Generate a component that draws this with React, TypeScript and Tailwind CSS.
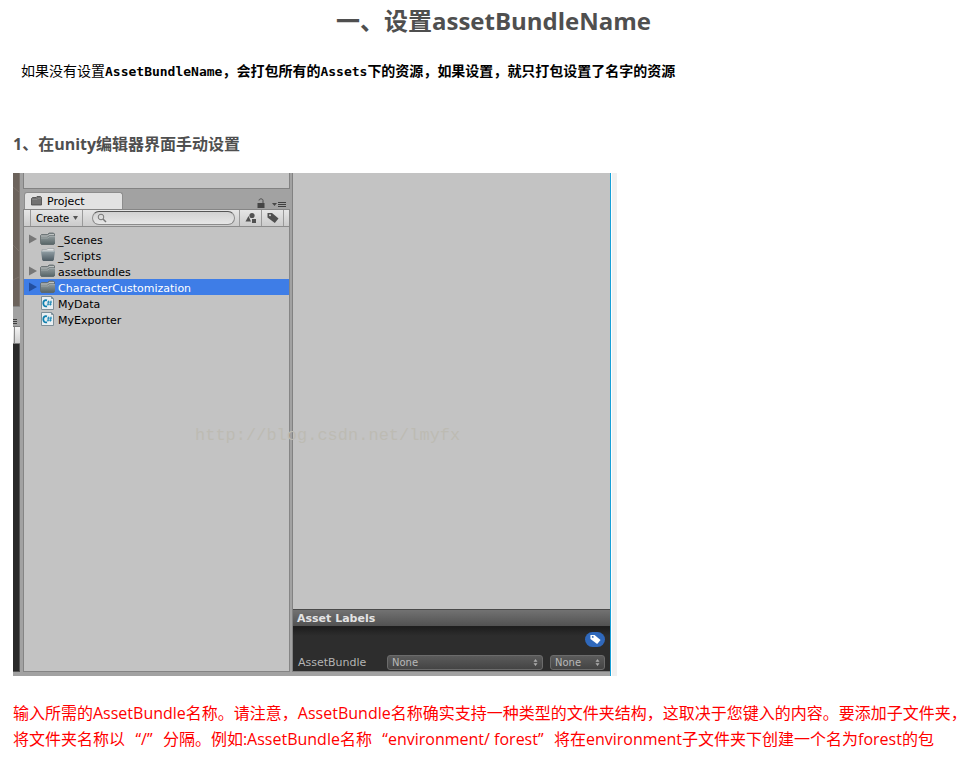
import React from "react";

type Asset = { name: string; kind: "folder" | "open" | "script"; arrow?: boolean; selected?: boolean };

// Full-width Chinese comma
const comma = "\uFF0C";

const assets: Asset[] = [
  { name: "_Scenes", kind: "folder", arrow: true },
  { name: "_Scripts", kind: "open" },
  { name: "assetbundles", kind: "folder", arrow: true },
  { name: "CharacterCustomization", kind: "folder", arrow: true, selected: true },
  { name: "MyData", kind: "script" },
  { name: "MyExporter", kind: "script" },
];

function AssetIcon({ kind }: { kind: Asset["kind"] }) {
  if (kind === "script") {
    return (
      <svg width="16" height="16" viewBox="0 0 16 16" className="shrink-0" aria-hidden="true">
        <path d="M1.500 1.500h10l2 2v11h-12z" fill="#e9eff2" stroke="#7e8f98" />
        <path d="M11.500 1.500v2h2" fill="none" stroke="#7e8f98" />
        <path d="M7 5.300C4.600 4.600 3.300 6.100 3.300 8.300s1.400 3.600 3.700 3" fill="none" stroke="#0e7fae" strokeWidth="1.800" />
        <path d="M8.600 5.600l-.7 5M11 5.600l-.7 5M7.200 7.100h4.800M6.900 9.200h4.800" stroke="#1787b5" strokeWidth="0.9" />
      </svg>
    );
  }
  if (kind === "open") {
    return (
      <svg width="16" height="16" viewBox="0 0 16 16" className="shrink-0" aria-hidden="true">
        <defs>
          <linearGradient id="openFolder" x1="0" y1="0" x2="0" y2="1">
            <stop offset="0" stopColor="#93a0a6" />
            <stop offset="1" stopColor="#4c5a62" />
          </linearGradient>
        </defs>
        <path d="M2 4V2.500h4.500L8 1.500h6V4H2z" fill="#dfe2e3" stroke="#9ca2a5" strokeWidth="0.7" />
        <path d="M1 4h14l-1.200 9-1 1H3.200l-1-1z" fill="url(#openFolder)" />
        <path d="M1.500 4.500h13" stroke="#b3bcc0" strokeWidth="0.8" />
      </svg>
    );
  }
  return (
    <svg width="16" height="16" viewBox="0 0 16 16" className="shrink-0" aria-hidden="true">
      <defs>
        <linearGradient id="folder" x1="0" y1="0" x2="0" y2="1">
          <stop offset="0" stopColor="#8f999b" />
          <stop offset="1" stopColor="#566466" />
        </linearGradient>
      </defs>
      <path d="M.5 12.500V4.500L1.500 3.500h6l1.500-1.500h4.500l1 1v9.500l-1 1h-12z" fill="#7e8789" stroke="#5f686b" strokeWidth="0.8" />
      <path d="M1 5h6.500L9 3.500h5" fill="none" stroke="#c6caca" strokeWidth="0.9" />
      <path d="M1 7h7l1.500-1.500H15v7l-1 1H1.500L1 13z" fill="url(#folder)" />
      <path d="M1 7h7l1.500-1.500H15" fill="none" stroke="#a9b1b3" strokeWidth="0.7" />
    </svg>
  );
}

function TagShape({ size, fill, hole }: { size: number; fill: string; hole: string }) {
  return (
    <svg width={size} height={size} viewBox="0 0 12 12" aria-hidden="true">
      <path d="M.5 1h4.500l6.500 5.500-3.700 4.500L.5 5.500z" fill={fill} />
      <circle cx="3" cy="3.200" r="1" fill={hole} />
    </svg>
  );
}

function LabelSelect({ id, label, width }: { id: string; label: string; width: string }) {
  return (
    <div className={`relative ${width}`}>
      <select
        id={id}
        aria-label={label}
        className="block h-[15px] w-full appearance-none rounded-[3px] border border-[#6b6b6b] bg-linear-to-b from-[#5b5b5b] to-[#444] px-1 text-[10px] leading-[13px] text-[#b8b8b8]"
      >
        <option>None</option>
      </select>
      <svg width="5" height="7" viewBox="0 0 5 7" className="pointer-events-none absolute top-1 right-[5px]" aria-hidden="true">
        <path d="M2.500 0l2 2.800h-4zM2.500 7l-2-2.800h4z" fill="#adadad" />
      </svg>
    </div>
  );
}

function SideStrip() {
  return (
    <div className="flex w-[7px] shrink-0 flex-col">
      <div className="h-[133px] border-r border-[#7d756f] bg-[#6c635c]">
        <svg width="6" height="133" viewBox="0 0 6 133" aria-hidden="true">
          <path d="M0 14l6 5M0 72l6 6M0 107l6-3" stroke="#7b726b" fill="none" />
        </svg>
      </div>
      <div className="flex h-5 flex-col justify-end border-t border-[#858585] bg-[#a2a2a2] pb-px">
        <svg width="5" height="6" viewBox="0 0 5 6" aria-hidden="true">
          <path d="M0 .5h4M0 2.500h4M0 4.500h4" stroke="#3f3f3f" />
        </svg>
      </div>
      <div className="h-[18px] border-y border-[#7c7c7c] bg-linear-to-b from-[#f4f4f4] to-[#cfcfcf]">
        <div className="h-full w-[2px] border-r border-[#8a8a8a]" />
      </div>
      <div className="grow border-r border-b border-[#555] bg-[#292929]" />
    </div>
  );
}

function ProjectPanel() {
  return (
    <div className="flex w-[267px] shrink-0 flex-col">
      <div className="h-4 border-x border-b border-[#828282] bg-[#c3c3c3]" />
      <div className="flex h-5 items-end justify-between pl-px">
        <button className="flex h-[17px] w-[99px] items-center gap-1 rounded-t-[3px] border-x border-t border-[#8d8d8d] bg-[#e2e2e2] pl-1.5 text-[11px] leading-4">
          <svg width="12" height="10" viewBox="0 0 12 10" aria-hidden="true">
            <path d="M.5 9V2.500l1-1h3.500L6 .5h3.500l1 1V9z" fill="#737373" stroke="#484848" strokeWidth="0.8" />
            <path d="M1 3.500h5l1-1h3" stroke="#8b8b8b" strokeWidth="0.7" fill="none" />
          </svg>
          <span className="pt-0.5">Project</span>
        </button>
        <div className="flex items-end gap-[7px] pr-1 pb-px">
          <button aria-label="锁定">
            <svg width="8" height="10" viewBox="0 0 8 10" className="block" aria-hidden="true">
              <path d="M2 2.500C2 .3 6 .3 6 2.500V5" fill="none" stroke="#4a4a4a" />
              <path d="M.5 5H7.500v5H.5z" fill="#454545" />
            </svg>
          </button>
          <button aria-label="菜单">
            <svg width="14" height="7" viewBox="0 0 14 7" className="block" aria-hidden="true">
              <path d="M0 2h5L2.500 5z" fill="#484848" />
              <path d="M6 1.500h8M6 3.500h8M6 5.500h8" stroke="#3f3f3f" />
            </svg>
          </button>
        </div>
      </div>
      <div className="flex grow flex-col border border-[#858585] bg-[#c3c3c3]">
        <div className="flex h-[17px] items-stretch border-b border-[#8c8c8c] bg-linear-to-b from-[#e6e6e6] to-[#cbcbcb] pl-1.5">
          <button className="flex w-[53px] items-center justify-between border-x border-[#9a9a9a] px-[5px] text-[10px] leading-4">
            <span className="pt-0.5">Create</span>
            <svg width="5" height="4" viewBox="0 0 5 4" className="-mr-px" aria-hidden="true">
              <path d="M0 0h5L2.500 4z" fill="#555" />
            </svg>
          </button>
          <label className="my-px mr-1 ml-[9px] flex grow items-center rounded-full border border-[#8b8b8b] border-t-[#555] bg-linear-to-b from-[#d2d2d2] to-[#e6e6e6] pl-1">
            <svg width="10" height="10" viewBox="0 0 10 10" className="shrink-0" aria-hidden="true">
              <circle cx="4" cy="4" r="2.800" fill="none" stroke="#777" />
              <path d="M6 6l3 3" stroke="#777" strokeWidth="1.400" />
            </svg>
            <input aria-label="搜索" className="h-3 w-0 min-w-0 grow bg-transparent text-[10px] outline-none" />
          </label>
          <button aria-label="按类型筛选" className="flex w-[22px] items-center justify-center border-l border-[#9a9a9a]">
            <svg width="12" height="12" viewBox="0 0 12 12" aria-hidden="true">
              <circle cx="7" cy="3.500" r="2.600" fill="#505050" />
              <path d="M.5 9.500L3.500 4 6 9.500z" fill="#505050" />
              <path d="M7 7h4v4H7z" fill="#505050" />
            </svg>
          </button>
          <button aria-label="按标签筛选" className="flex w-[23px] items-center justify-center border-x border-[#9a9a9a]">
            <TagShape size={12} fill="#505050" hole="#d0d0d0" />
          </button>
          <div className="w-[5px]" />
        </div>
        <ul className="pt-1">
          {assets.map((a) => (
            <li key={a.name}>
              <button
                className={`flex h-4 w-full items-center pl-1 text-left text-[11px] leading-4 ${a.selected ? "bg-[#3e7de7] text-white" : "text-black"}`}
              >
                <span className="w-3 shrink-0">
                  {a.arrow && (
                    <svg width="9" height="10" viewBox="0 0 9 10" className="block" aria-hidden="true">
                      <path d="M1 .5l8 4.500-8 4.500z" fill={a.selected ? "#234f9f" : "#777"} />
                    </svg>
                  )}
                </span>
                <AssetIcon kind={a.kind} />
                <span className="pt-1 pl-0.5">{a.name}</span>
              </button>
            </li>
          ))}
        </ul>
      </div>
    </div>
  );
}

function InspectorPanel() {
  return (
    <div className="flex min-w-0 grow flex-col border-b border-l border-[#828282] bg-[#c3c3c3]">
      <div className="grow" />
      <div className="h-[18px] border-y border-t-[#4a4a4a] border-b-[#1f1f1f] bg-linear-to-b from-[#727272] to-[#525252] pl-1 text-[11px] leading-[18px] font-bold text-[#e4e4e4]">
        Asset Labels
      </div>
      <div className="flex flex-col gap-2 bg-linear-to-b from-[#1e1e1e] via-[#2d2d2d] via-20% to-[#2d2d2d] px-[5px] pt-[5px] pb-px">
        <button aria-label="标签" className="flex h-[15px] w-5 items-center justify-center self-end rounded-full bg-[#2f68bb]">
          <TagShape size={11} fill="#fff" hole="#2f68bb" />
        </button>
        <div className="flex h-[15px] items-center">
          <label htmlFor="bundle" className="w-[89px] shrink-0 text-[11px] leading-4 text-[#b4b4b4]">
            AssetBundle
          </label>
          <LabelSelect id="bundle" label="AssetBundle" width="mr-[7px] min-w-0 grow" />
          <LabelSelect id="variant" label="Variant" width="w-[55px]" />
        </div>
      </div>
    </div>
  );
}

function OpenQuote() {
  return <span className="inline-block w-4 text-right">{"\u201C"}</span>;
}

function CloseQuote() {
  return <span className="inline-block w-4">{"\u201D"}</span>;
}

export default function App() {
  return (
    <main lang="zh-CN" className="bg-white pr-1.5 pl-[13px] font-['Open_Sans','Noto_Sans_CJK_SC',sans-serif] text-[#4f4f4f]">
      <h1 className="pt-[3px] text-center text-2xl leading-9 font-bold">一、设置assetBundleName</h1>
      <p className="mt-[21px] pl-2 font-['DejaVu_Sans_Mono','Noto_Sans_CJK_SC',monospace] text-sm leading-[22px] text-black">
        如果没有设置
        <strong>
          <span className="text-[13px]">AssetBundleName</span>
          {comma}会打包所有的<span className="text-[13px]">Assets</span>
          下的资源{comma}如果设置{comma}就只打包设置了名字的资源
        </strong>
      </p>
      <h2 className="mt-[49px] text-base leading-6 font-bold">1、在unity编辑器界面手动设置</h2>
      <figure className="relative mt-[17px] flex min-h-[503px] w-full max-w-[604px] overflow-hidden font-['DejaVu_Sans',sans-serif] text-black">
        <div className="flex min-w-0 grow items-stretch gap-[3px] bg-[#a2a2a2] pb-1">
          <SideStrip />
          <div className="flex min-w-0 grow gap-0.5">
            <ProjectPanel />
            <InspectorPanel />
          </div>
        </div>
        <div className="w-px shrink-0 bg-[#18a0d7]" />
        <div className="w-px shrink-0 bg-white" />
        <div className="w-[5px] shrink-0 bg-[#f0f0f0]" />
        <span className="pointer-events-none absolute top-[251px] left-[182px] font-['Liberation_Mono',monospace] text-[17px] leading-6 text-[#bdbbb3]">
          http://blog.csdn.net/lmyfx
        </span>
      </figure>
      <p className="mt-6 text-base leading-[26px] text-[#f00]">
        输入所需的AssetBundle名称。请注意{comma}AssetBundle名称确实支持一种类型的文件夹结构{comma}
        这取决于您键入的内容。要添加子文件夹{comma}
        将文件夹名称以
        <OpenQuote />/<CloseQuote />
        分隔。例如:AssetBundle名称
        <OpenQuote />environment/ forest<CloseQuote />
        将在environment子文件夹下创建一个名为forest的包
      </p>
    </main>
  );
}
